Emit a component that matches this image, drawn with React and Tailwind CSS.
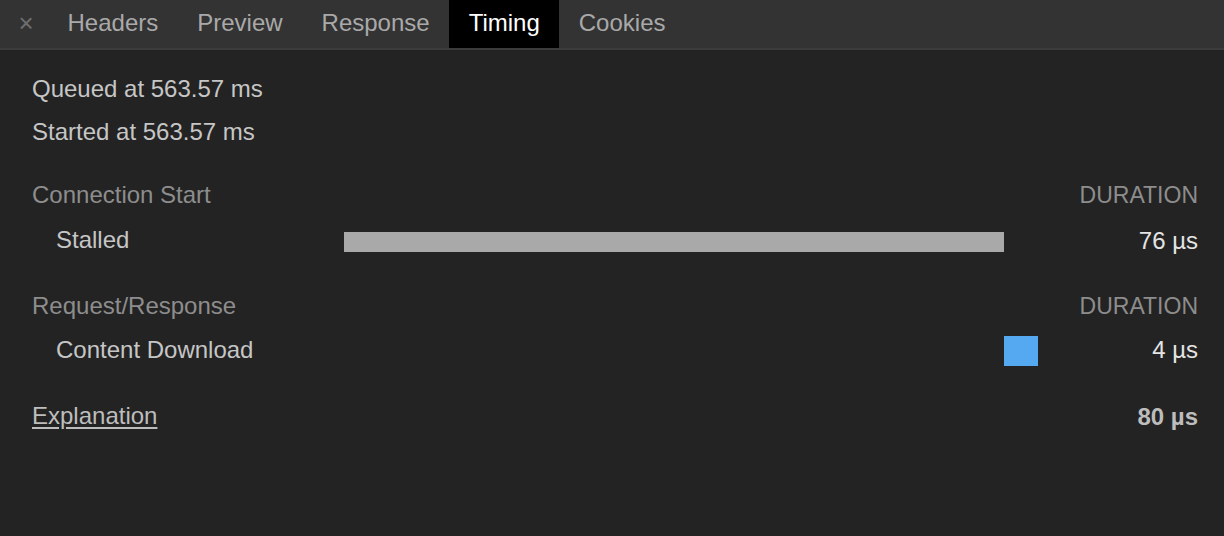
export default function App() {
  const tabs = ["Headers", "Preview", "Response", "Timing", "Cookies"];
  return (
    <div
      className="w-[1224px] h-[536px] bg-[#232323] overflow-hidden flex flex-col"
      style={{ fontFamily: '"Liberation Sans", Arial, sans-serif' }}
    >
      <div className="h-[48px] bg-[#333333] flex items-stretch shrink-0">
        <div className="w-[48px] flex items-center justify-center pl-1 pb-[2px] text-[26px] text-[#6e6e6e] leading-none">
          ×
        </div>
        {tabs.map((t) => (
          <div
            key={t}
            className={
              t === "Timing"
                ? "px-[19.5px] pb-[3px] flex items-center text-[24px] bg-black text-white"
                : "px-[19.5px] pb-[3px] flex items-center text-[24px] text-[#a9a9a9]"
            }
          >
            {t}
          </div>
        ))}
      </div>
      <div className="h-[2px] bg-[#3c3c3c] shrink-0" />
      <div className="pl-8 pr-[26px] pt-[17px] text-[24px] text-[#c6c6c6]">
        <div className="h-[43px] flex items-center">Queued at 563.57 ms</div>
        <div className="h-[43px] flex items-center">Started at 563.57 ms</div>
        <div className="h-[21px]" />
        <div className="grid grid-cols-[312px_1fr_160px]">
          <div className="h-[42px] flex items-center text-[#8d8d8d]">Connection Start</div>
          <div />
          <div className="h-[42px] flex items-center justify-end text-[23px] text-[#8d8d8d]">DURATION</div>

          <div className="h-[1px] col-span-3" />

          <div className="h-[48px] flex items-center pl-6 pb-[2px]">Stalled</div>
          <div className="h-[48px] flex items-center">
            <div className="h-[20px] w-[660px] bg-[#a9a9a9] mt-[2px]" />
          </div>
          <div className="h-[48px] flex items-center justify-end text-[#e4e4e4]">76 µs</div>

          <div className="h-[20px] col-span-3" />

          <div className="h-[42px] flex items-center text-[#8d8d8d]">Request/Response</div>
          <div />
          <div className="h-[42px] flex items-center justify-end text-[23px] text-[#8d8d8d]">DURATION</div>

          <div className="h-[46px] flex items-center pl-6">Content Download</div>
          <div className="h-[46px] flex items-center pl-[660px]">
            <div className="h-[30px] w-[34px] bg-[#55a9f1] mt-[2px]" />
          </div>
          <div className="h-[46px] flex items-center justify-end text-[#e4e4e4]">4 µs</div>

          <div className="h-[22px] col-span-3" />

          <div className="h-[42px] flex items-center">
            <span className="underline underline-offset-[3px] text-[#bdbdbd]">Explanation</span>
          </div>
          <div />
          <div className="h-[42px] flex items-center justify-end font-bold text-[#bdbdbd] pt-[2px]">80 µs</div>
        </div>
      </div>
    </div>
  );
}
